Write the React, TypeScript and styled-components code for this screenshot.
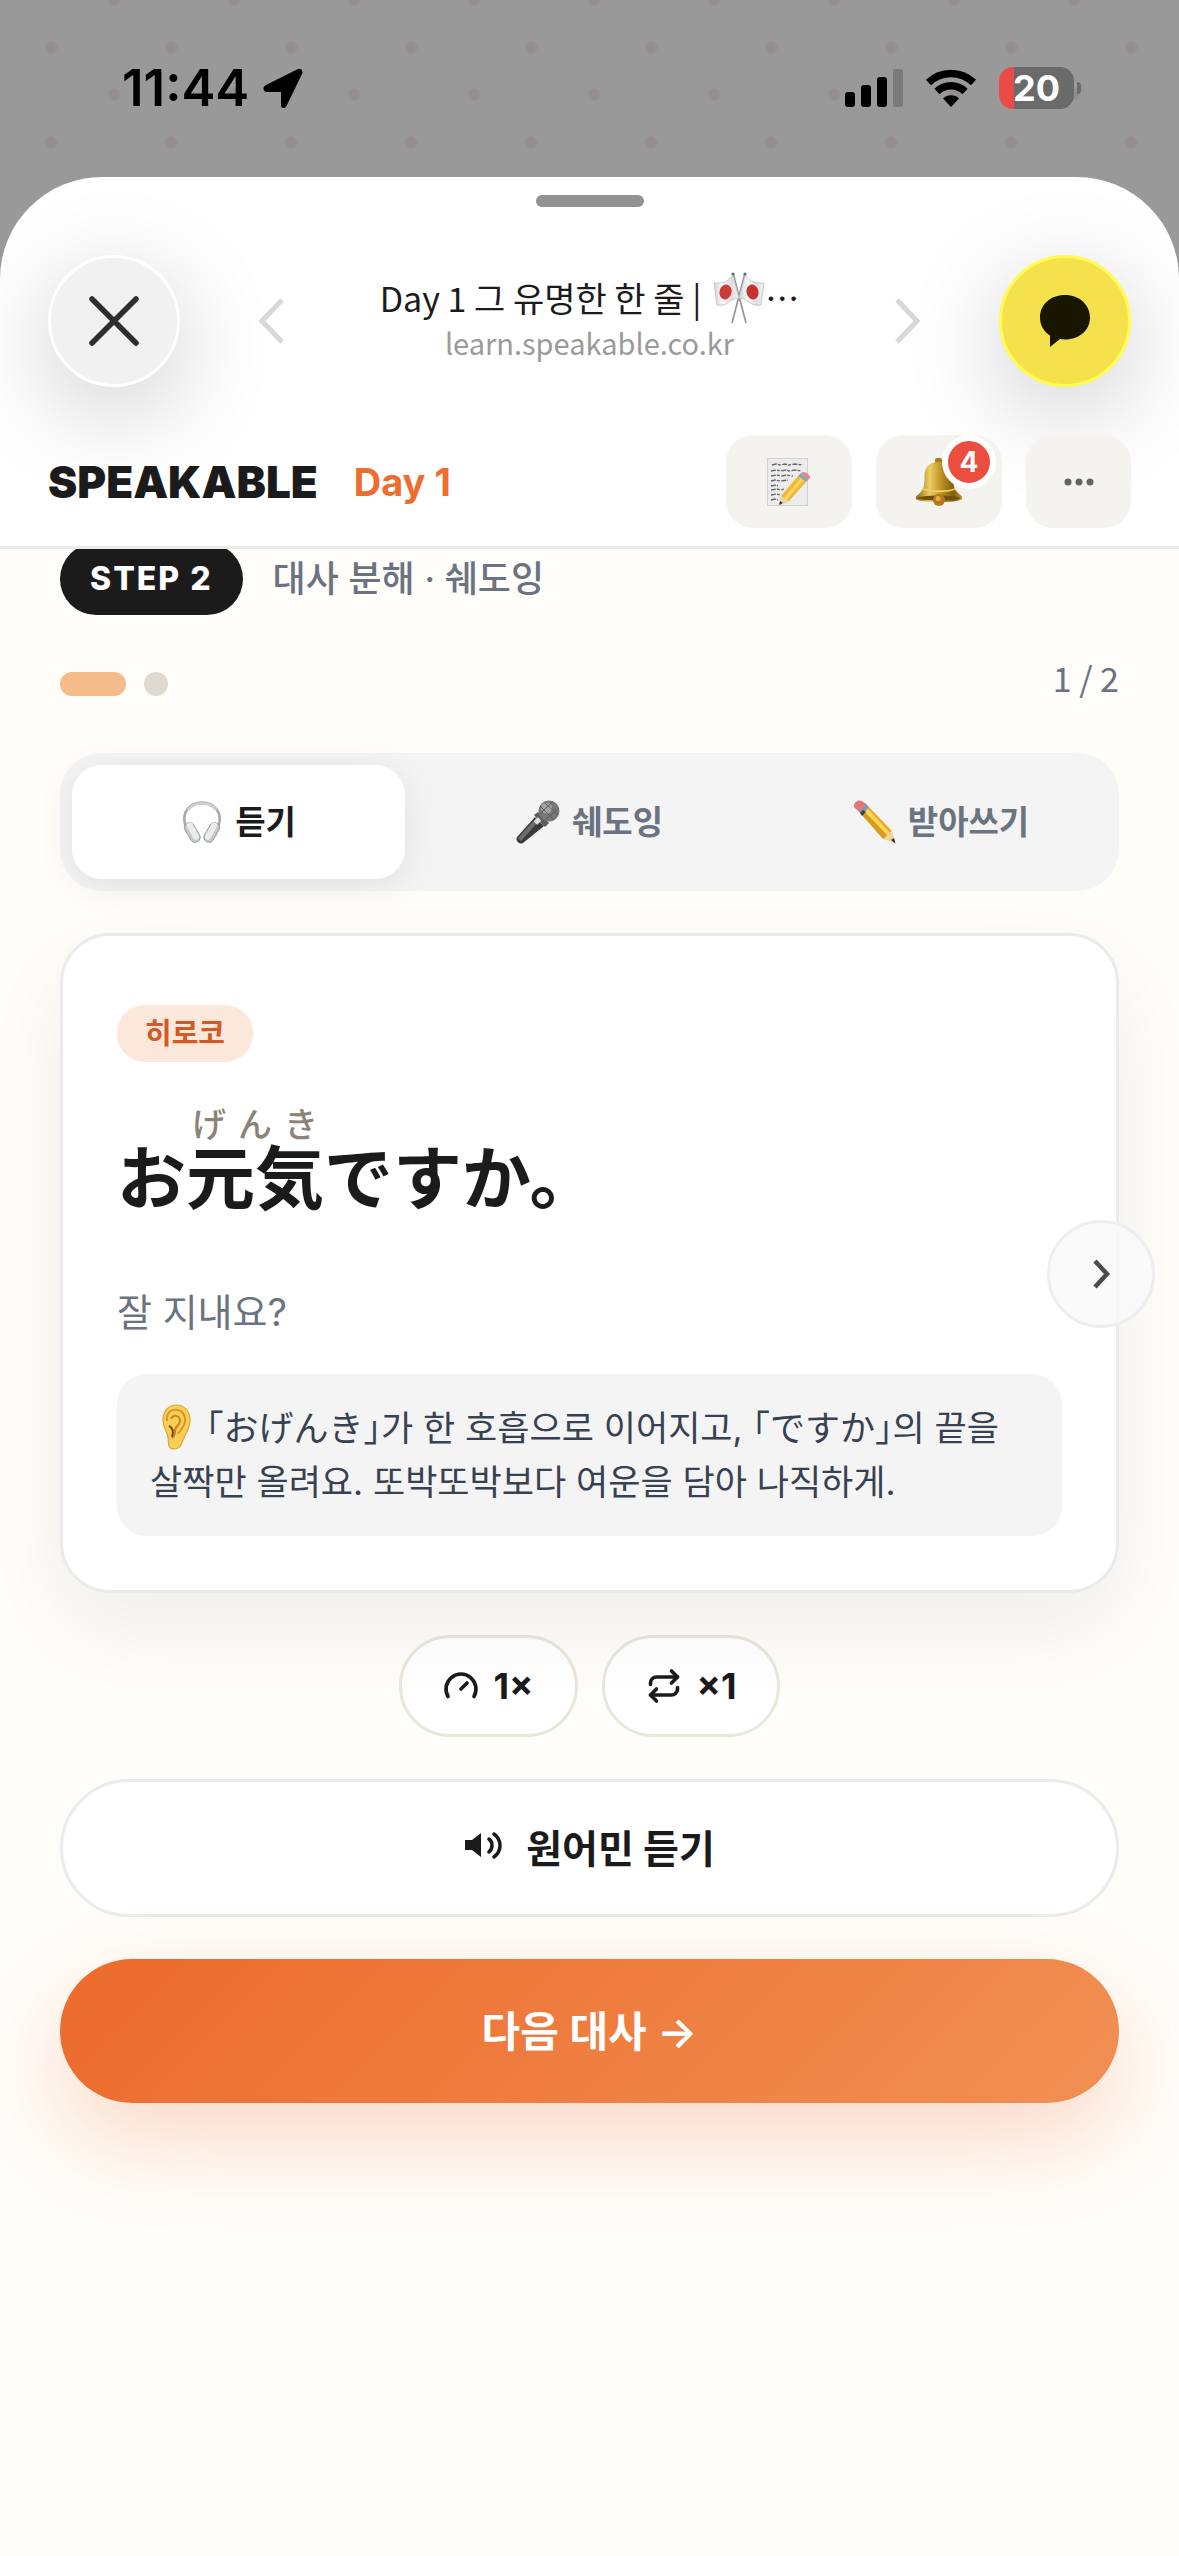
import React, { useState } from "react";
import styled, { createGlobalStyle, css } from "styled-components";
import { Gauge, Repeat } from "lucide-react";

const color = {
  ink: "#1b1b1b",
  muted: "#6b7280",
  body: "#374151",
  line: "#ebebec",
  soft: "#f4f4f4",
  paper: "#fffdf9",
  accent: "#ee6c2d",
};

const GlobalStyle = createGlobalStyle`
  *, *::before, *::after { box-sizing: border-box; }
  body {
    margin: 0;
    background: #999999;
    color: ${color.ink};
    font-family: Inter, "Noto Sans CJK KR", "Noto Sans CJK JP", sans-serif;
  }
  button {
    margin: 0;
    padding: 0;
    border: 0;
    background: none;
    color: inherit;
    font: inherit;
    cursor: pointer;
  }
  svg { display: block; flex: none; }
`;

const Screen = styled.div`
  display: flex;
  flex-direction: column;
  min-height: 100vh;
  background-color: #999999;
  background-image:
    radial-gradient(circle, #958d91 5px, transparent 7px),
    radial-gradient(circle, #958d91 5px, transparent 7px);
  background-size: 120px 95px;
  background-position: -9px 0, 54px 47px;
`;

/* ---------- status bar ---------- */

const StatusBar = styled.div`
  display: flex;
  justify-content: space-between;
  align-items: center;
  padding: 58px 98px 59px 122px;
  color: #000;
`;

const StatusSide = styled.div<{ $gap: number }>`
  display: flex;
  align-items: center;
  gap: ${(p) => p.$gap}px;
`;

const Clock = styled.span`
  font-size: 51px;
  line-height: 60px;
  font-weight: 600;
`;

const Battery = styled.div`
  display: flex;
  align-items: center;
  gap: 3px;
`;

const BatteryBody = styled.div`
  width: 75px;
  height: 42px;
  border-radius: 14px;
  background: linear-gradient(90deg, #eb4b47 20%, #6a6a6a 20%);
  color: #fff;
  font-size: 36px;
  line-height: 42px;
  font-weight: 700;
  text-align: center;
`;

const BatteryTip = styled.div`
  width: 4px;
  height: 12px;
  border-radius: 0 4px 4px 0;
  background: #6a6a6a;
`;

/* ---------- sheet ---------- */

const Sheet = styled.div`
  flex: 1;
  display: flex;
  flex-direction: column;
  overflow: hidden;
  border-radius: 102px 102px 0 0;
  background: #fff;
`;

const GrabberZone = styled.div`
  display: flex;
  justify-content: center;
  height: 48px;
  padding-top: 18px;
`;

const Grabber = styled.div`
  width: 108px;
  height: 12px;
  border-radius: 6px;
  background: #929292;
`;

const BrowserBar = styled.header`
  display: flex;
  align-items: center;
  justify-content: space-between;
  padding: 30px 48px;
`;

const BarSide = styled.div`
  display: flex;
  align-items: center;
  gap: 78px;
`;

const RoundButton = styled.button<{ $fill: string; $edge: string }>`
  display: grid;
  place-items: center;
  width: 132px;
  height: 132px;
  border: 3px solid ${(p) => p.$edge};
  border-radius: 50%;
  background: ${(p) => p.$fill};
  box-shadow: 0 24px 100px rgba(0, 0, 0, 0.2);
`;

const PageInfo = styled.div`
  display: flex;
  flex-direction: column;
  align-items: center;
  padding-bottom: 10px;
  font-family: "Noto Sans CJK KR", sans-serif;
`;

const PageTitle = styled.div`
  display: flex;
  align-items: center;
  gap: 12px;
  font-size: 34px;
  line-height: 48px;
  white-space: nowrap;
`;

const TitleEnd = styled.span`
  display: flex;
  align-items: center;
`;

const PageHost = styled.div`
  color: #9a9a9a;
  font-size: 29px;
  line-height: 36px;
`;

const AppBar = styled.header`
  display: flex;
  align-items: center;
  justify-content: space-between;
  padding: 18px 48px;
  border-bottom: 3px solid ${color.line};
`;

const Brand = styled.div`
  display: flex;
  align-items: center;
  gap: 36px;
`;

const Logo = styled.span`
  font-size: 44px;
  line-height: 60px;
  font-weight: 900;
`;

const DayLabel = styled.span`
  color: ${color.accent};
  font-size: 38px;
  line-height: 60px;
  font-weight: 700;
`;

const AppActions = styled.div`
  display: flex;
  gap: 24px;
`;

const ActionButton = styled.button<{ $narrow?: boolean }>`
  position: relative;
  display: grid;
  place-items: center;
  width: ${(p) => (p.$narrow ? 105 : 126)}px;
  height: 93px;
  border-radius: 27px;
  background: #f4f3f0;
`;

const CountBadge = styled.span`
  position: absolute;
  top: 0;
  right: 6px;
  width: 54px;
  height: 54px;
  border: 6px solid #fff;
  border-radius: 50%;
  background: #eb4d3f;
  color: #fff;
  font-size: 28px;
  line-height: 42px;
  font-weight: 700;
  text-align: center;
`;

/* ---------- lesson ---------- */

const Lesson = styled.main`
  flex: 1;
  overflow: hidden;
  padding: 0 60px 60px;
  background: ${color.paper};
`;

const StepRow = styled.div`
  display: flex;
  align-items: center;
  gap: 30px;
  margin-top: -6px;
`;

const StepPill = styled.span`
  padding: 0 30px;
  border-radius: 36px;
  background: ${color.ink};
  color: #fff;
  font-size: 32px;
  line-height: 72px;
  font-weight: 800;
  letter-spacing: 2px;
`;

const StepName = styled.h1`
  margin: 0;
  color: ${color.muted};
  font-size: 36px;
  line-height: 72px;
  font-weight: 500;
`;

const ProgressRow = styled.div`
  display: flex;
  align-items: flex-end;
  justify-content: space-between;
  margin-top: 45px;
`;

const Dots = styled.div`
  display: flex;
  gap: 18px;
`;

const Dot = styled.span<{ $active?: boolean }>`
  width: ${(p) => (p.$active ? 66 : 24)}px;
  height: 24px;
  border-radius: 12px;
  background: ${(p) => (p.$active ? "#f5bb88" : "#dfdad0")};
`;

const PageCount = styled.span`
  color: ${color.muted};
  font-family: "Noto Sans CJK KR", sans-serif;
  font-size: 34px;
  line-height: 36px;
`;

const Tabs = styled.div`
  display: grid;
  grid-template-columns: repeat(3, 1fr);
  gap: 18px;
  margin-top: 57px;
  padding: 12px;
  border-radius: 42px;
  background: ${color.soft};
`;

const Tab = styled.button<{ $active: boolean }>`
  display: flex;
  align-items: center;
  justify-content: center;
  gap: 12px;
  height: 114px;
  border-radius: 30px;
  color: ${color.muted};
  font-size: 33px;
  line-height: 48px;
  font-weight: 700;
  ${(p) =>
    p.$active &&
    css`
      background: #fff;
      color: ${color.ink};
      box-shadow: 0 6px 36px rgba(0, 0, 0, 0.08);
    `}
`;

const CardSlot = styled.section`
  position: relative;
  margin: 42px 0 21px;
  padding-bottom: 21px;
`;

const Card = styled.article`
  display: flex;
  flex-direction: column;
  align-items: flex-start;
  padding: 69px 54px 54px;
  border: 3px solid ${color.line};
  border-radius: 50px;
  background: #fff;
  box-shadow: 0 36px 84px rgba(0, 0, 0, 0.06);
`;

const Speaker = styled.span`
  padding: 0 28px;
  border-radius: 28px;
  background: #fce8da;
  color: #d15a26;
  font-size: 29px;
  line-height: 57px;
  font-weight: 700;
`;

const Sentence = styled.p`
  display: flex;
  align-items: flex-end;
  margin: 45px 0 66px;
  font-family: "Liberation Sans", "Noto Sans CJK JP", sans-serif;
  font-size: 69px;
  line-height: 76px;
  font-weight: 700;
`;

const Ruby = styled.ruby`
  display: flex;
  flex-direction: column;
`;

const Reading = styled.rt`
  display: flex;
  order: -1;
  justify-content: space-around;
  color: #8c8378;
  font-size: 34px;
  line-height: 36px;
  font-weight: 500;
`;

const Translation = styled.p`
  margin: 0 0 35px;
  color: ${color.muted};
  font-size: 38px;
  line-height: 54px;
`;

const Hint = styled.p`
  align-self: stretch;
  margin: 0;
  padding: 27px 33px;
  border-radius: 30px;
  background: ${color.soft};
  color: ${color.body};
  font-size: 35px;
  line-height: 54px;
  font-feature-settings: "halt";
  word-break: keep-all;
`;

const InlineIcon = styled.span`
  display: inline-block;
  margin: 0 15px 0 12px;
  vertical-align: -9px;
`;

const NextArrow = styled.button`
  position: absolute;
  top: 50%;
  right: -36px;
  display: grid;
  place-items: center;
  width: 108px;
  height: 108px;
  transform: translateY(-50%);
  border: 3px solid #eceef0;
  border-radius: 50%;
  background: rgba(249, 249, 249, 0.85);
  color: #4b4b4b;
`;

const Chips = styled.div`
  display: flex;
  justify-content: center;
  gap: 24px;
`;

const Chip = styled.button`
  display: flex;
  align-items: center;
  gap: 15px;
  height: 102px;
  padding: 0 41px;
  border: 3px solid #ebe6dc;
  border-radius: 51px;
  background: #fff;
  font-size: 36px;
  font-weight: 700;
`;

const WideButton = styled.button<{ $primary?: boolean }>`
  display: flex;
  align-items: center;
  justify-content: center;
  gap: 24px;
  width: 100%;
  height: 138px;
  margin-top: 42px;
  padding-bottom: 4px;
  border: 3px solid ${color.line};
  border-radius: 72px;
  background: #fff;
  font-size: 39px;
  font-weight: 700;
  ${(p) =>
    p.$primary &&
    css`
      height: 144px;
      padding-bottom: 6px;
      border: 0;
      background: linear-gradient(135deg, #ec6a2c, #f19053);
      box-shadow: 0 36px 90px rgba(236, 106, 44, 0.24);
      color: #fff;
      font-size: 42px;
      font-weight: 600;
    `}
`;

/* ---------- drawings ---------- */

const LocationArrow = () => (
  <svg width="40" height="40" viewBox="0 0 40 40" aria-hidden="true">
    <path d="M35 1 3 17C-1 19 0 24 4 24h14v13c0 4 4 4 5.500 1L39 6c1.500-3-1-6-4-5z" fill="#000" />
  </svg>
);

const SignalBars = () => (
  <svg width="58" height="38" viewBox="0 0 58 38" aria-hidden="true">
    <rect x="0" y="23" width="10" height="15" rx="3" />
    <rect x="16" y="16" width="10" height="22" rx="3" />
    <rect x="32" y="8" width="10" height="30" rx="3" />
    <rect x="48" y="0" width="10" height="38" rx="3" fill="#7a7a7a" />
  </svg>
);

const WifiMark = () => (
  <svg width="52" height="38" viewBox="0 0 52 38" aria-hidden="true">
    <path d="M3.500 13.500a32.500 32.500 0 0 1 45 0" fill="none" stroke="#000" strokeWidth="7.500" />
    <path d="M12 22.500a20 20 0 0 1 28 0" fill="none" stroke="#000" strokeWidth="7.500" />
    <path d="M18 29.500a11.500 11.500 0 0 1 16 0L26 38z" />
  </svg>
);

const CloseMark = () => (
  <svg width="52" height="52" viewBox="0 0 52 52" aria-hidden="true">
    <path d="M4 4l44 44M48 4L4 48" stroke="#2e2e2e" strokeWidth="5.500" strokeLinecap="round" />
  </svg>
);

const ThinChevron = ({ back }: { back?: boolean }) => (
  <svg width="26" height="46" viewBox="0 0 26 46" aria-hidden="true">
    <path d={back ? "M24 2 4 23l20 21" : "M2 2l20 21L2 44"} fill="none" stroke="#d8d8d8" strokeWidth="5" />
  </svg>
);

const TalkBubble = () => (
  <svg width="52" height="54" viewBox="0 0 52 54" aria-hidden="true">
    <path
      d="M26 1C11.500 1 1 10.500 1 23.500c0 8 4 14 10 18V53l10-8c1.600.3 3.200.5 5 .5 14.500 0 25-9.500 25-22S40.500 1 26 1z"
      fill="#191600"
    />
  </svg>
);

const CrossedFlags = () => (
  <svg width="52" height="52" viewBox="0 0 52 52" aria-hidden="true">
    <defs>
      <linearGradient id="cloth" x1="0" x2="1">
        <stop offset="0" stopColor="#d4d4d4" />
        <stop offset="0.35" stopColor="#fafafa" />
        <stop offset="0.7" stopColor="#dedede" />
        <stop offset="1" stopColor="#f4f4f4" />
      </linearGradient>
    </defs>
    <path d="M32 1 19 51M20 1l13 50" stroke="#8e9399" strokeWidth="1.600" />
    <path d="M20 4C15 7 14 12 1 11l3 22c12 2 12-7 22-7z" fill="url(#cloth)" stroke="#bdbdbd" strokeWidth=".8" />
    <path d="M32 4c5 3 6 8 19 7l-3 22c-12 2-12-7-22-7z" fill="url(#cloth)" stroke="#bdbdbd" strokeWidth=".8" />
    <ellipse cx="12.500" cy="20" rx="6" ry="7.500" fill="#cf3a3a" transform="rotate(15 12.500 20)" />
    <ellipse cx="39.500" cy="20" rx="6" ry="7.500" fill="#c93030" transform="rotate(-15 39.500 20)" />
    <circle cx="20" cy="2" r="1.600" fill="#5e6a7c" />
    <circle cx="32" cy="2" r="1.600" fill="#5e6a7c" />
  </svg>
);

const MemoMark = () => (
  <svg width="44" height="48" viewBox="0 0 44 48" aria-hidden="true">
    <rect x=".5" y=".5" width="40" height="47" fill="#ececec" stroke="#d2d2d2" />
    <path
      d="M5 7l4-1 4 1 5-1 4 1 6-1 7 1M4 13l5-1 4 1 6-1 3 1 7-1 5 1M4 18l6-1 5 1 5-1 6 1M4 23l4-1 6 1 7-1M4 28l5-1 2 1M4 32l6-1 4 1 3-1M4 37l5-1 4 1M4 42l4-1 3 1"
      fill="none"
      stroke="#666"
      strokeWidth="1.300"
      strokeDasharray="5 1 3 1.500"
    />
    <path d="M14 38 31 18l8 6-17 19-9 4z" fill="#f1b933" />
    <path d="M17 40 34 20l2.500 2L19.500 42z" fill="#ffd65c" />
    <path d="M14 38l-2 8 2 1 8-4z" fill="#f0d2a0" />
    <path d="M13 43l-1 4 4-2z" fill="#333" />
    <path d="M31 18l3-3 8 6-3 3z" fill="#92a3b4" />
    <path d="M34 15c2-2 5-1 7 1s3 4 1 5z" fill="#e8848a" />
  </svg>
);

const BellMark = () => (
  <svg width="48" height="48" viewBox="0 0 48 48" aria-hidden="true">
    <defs>
      <linearGradient id="brass" x1="0" x2="1">
        <stop offset="0" stopColor="#8d6a10" />
        <stop offset="0.3" stopColor="#ecce62" />
        <stop offset="0.55" stopColor="#bd9223" />
        <stop offset="0.8" stopColor="#80600e" />
        <stop offset="1" stopColor="#c09528" />
      </linearGradient>
    </defs>
    <rect x="20" y="0" width="7" height="8" rx="2" fill="#a47e1c" />
    <path
      d="M23.500 4C14 4 9.500 10 9.500 18c0 9 0 14-8 20-1 2-1 3 0 3.500 6 3.500 39 3.500 45 0 1-.5 1-1.500 0-3.500-8-6-8.500-11-8.500-20 0-8-5-14-14.500-14z"
      fill="url(#brass)"
    />
    <path d="M8 31c8 3 24 3 32 0" fill="none" stroke="#efd067" strokeWidth="1.800" />
    <ellipse cx="24" cy="40" rx="21" ry="2.500" fill="#71510a" />
    <circle cx="24" cy="42" r="6" fill="#b5781e" />
    <circle cx="23" cy="40.500" r="2.500" fill="#e7ae50" />
  </svg>
);

const MoreMark = () => (
  <svg width="30" height="8" viewBox="0 0 30 8" fill="#68625f" aria-hidden="true">
    <circle cx="4" cy="4" r="3.500" />
    <circle cx="15" cy="4" r="3.500" />
    <circle cx="26" cy="4" r="3.500" />
  </svg>
);

const HeadphonesMark = () => (
  <svg width="42" height="44" viewBox="0 0 42 44" aria-hidden="true">
    <path d="M4.500 26C0 12 9 2.500 21 2.500S42 12 37.500 26" fill="none" stroke="#a8a8a8" strokeWidth="2.500" />
    <path d="M7 10C11 4 16 3.500 21 3.500S31 4 35 10" fill="none" stroke="#cfcfcf" strokeWidth="3" />
    <g stroke="#8f949a" strokeWidth=".8">
      <rect x="-5" y="-10" width="10" height="21" rx="4.500" transform="translate(11 32) rotate(-30)" fill="#c3c8ce" />
      <rect x="-4" y="-10" width="6" height="19" rx="3" transform="translate(13 31) rotate(-28)" fill="#ececec" stroke="none" />
      <rect x="-5" y="-10" width="10" height="21" rx="4.500" transform="translate(31 32) rotate(30)" fill="#c3c8ce" />
      <rect x="-2" y="-10" width="6" height="19" rx="3" transform="translate(29 31) rotate(28)" fill="#ececec" stroke="none" />
    </g>
  </svg>
);

const MicMark = () => (
  <svg width="44" height="44" viewBox="0 0 44 44" aria-hidden="true">
    <path d="M19 17l9 9L7 43c-3 2-8-2-6-6z" fill="#3a3a3a" />
    <path d="M20 18l3 3L5 41l-3-3z" fill="#6c6c6c" />
    <path d="M18 15l4-3 11 11-4 4z" fill="#5a5a5a" />
    <circle cx="33" cy="11" r="10.500" fill="#777" />
    <circle cx="30.500" cy="8" r="5.500" fill="#a3a3a3" />
    <path d="M24 6l14 14M28 2l14 13M24 14l13-13M29 20L43 8" stroke="#5d5d5d" strokeWidth="1" />
    <rect x="19" y="18" width="5" height="6" rx="1" fill="#ddd" transform="rotate(45 21.500 21)" />
  </svg>
);

const PencilMark = () => (
  <svg width="44" height="44" viewBox="0 0 44 44" aria-hidden="true">
    <path d="M10 15 17 7l23 24-9 8z" fill="#e9ab28" />
    <path d="M10 15l3-3.500 23 24-4.500 3.500z" fill="#d99a1e" />
    <path d="M13 12l3-3 22 24-2.500 2.500z" fill="#ffd653" />
    <path d="M31 39l9-8 3.500 12z" fill="#f1d29b" />
    <path d="M39 40l3-2 1.500 5.500z" fill="#2f2f2f" />
    <path d="M6 11l7-8 4 4-7 8z" fill="#8299b2" />
    <path d="M8 13l3-3 3 2-4 4z" fill="#3e4348" />
    <path d="M2 7C1 3 6-1 10 1l4 3-7 8z" fill="#e5777b" />
  </svg>
);

const EarMark = () => (
  <svg width="29" height="46" viewBox="0 0 29 46" aria-hidden="true">
    <path
      d="M14 1C6 1 1 8 1 16c0 8 4 11 5 17 1 5-1 12 6 12 6 0 7-4 9-9 2-6 7-11 7-20S22 1 14 1z"
      fill="#f8cf55"
      stroke="#dfa532"
      strokeWidth="1.200"
    />
    <path d="M5 17C4 9 9 5 15 6c7 1 10 8 7 15-2 5-5 6-6 9" fill="none" stroke="#d9962b" strokeWidth="2" />
    <path d="M9 15c2-5 9-4 9 2 0 5-6 5-5 11 0 3-2 6-3 6" fill="none" stroke="#c98424" strokeWidth="2" />
    <path d="M7 22c4 2 5 5 3 11" fill="none" stroke="#7a4a12" strokeWidth="2" />
  </svg>
);

const NextChevron = () => (
  <svg width="20" height="32" viewBox="0 0 20 32" aria-hidden="true">
    <path d="M4 3l12 13L4 29" fill="none" stroke="currentColor" strokeWidth="4.500" />
  </svg>
);

const SpeakerMark = () => (
  <svg width="38" height="28" viewBox="0 0 38 28" aria-hidden="true">
    <path d="M1 8h7l9-7v24l-9-7H1z" fill={color.ink} />
    <path d="M25 7c4 3 4 10 0 13M30 2c8 6 8 17 0 23" fill="none" stroke={color.ink} strokeWidth="3.500" strokeLinecap="round" />
  </svg>
);

const tabs = [
  { id: "listen", label: "듣기", icon: <HeadphonesMark /> },
  { id: "shadow", label: "쉐도잉", icon: <MicMark /> },
  { id: "dictate", label: "받아쓰기", icon: <PencilMark /> },
];

export default function App() {
  const [active, setActive] = useState("listen");

  return (
    <Screen>
      <GlobalStyle />
      <StatusBar>
        <StatusSide $gap={14}>
          <Clock>11:44</Clock>
          <LocationArrow />
        </StatusSide>
        <StatusSide $gap={22}>
          <SignalBars />
          <WifiMark />
          <Battery>
            <BatteryBody>20</BatteryBody>
            <BatteryTip />
          </Battery>
        </StatusSide>
      </StatusBar>

      <Sheet>
        <GrabberZone>
          <Grabber />
        </GrabberZone>

        <BrowserBar>
          <BarSide>
            <RoundButton $fill="#f1f1f1" $edge="#ffffff" aria-label="닫기">
              <CloseMark />
            </RoundButton>
            <button aria-label="이전">
              <ThinChevron back />
            </button>
          </BarSide>
          <PageInfo>
            <PageTitle>
              <span>Day 1 그 유명한 한 줄 |</span>
              <TitleEnd>
                <CrossedFlags />
                <span>⋯</span>
              </TitleEnd>
            </PageTitle>
            <PageHost>learn.speakable.co.kr</PageHost>
          </PageInfo>
          <BarSide>
            <button aria-label="다음">
              <ThinChevron />
            </button>
            <RoundButton $fill="#f5e14b" $edge="#fffb4f" aria-label="공유">
              <TalkBubble />
            </RoundButton>
          </BarSide>
        </BrowserBar>

        <AppBar>
          <Brand>
            <Logo>SPEAKABLE</Logo>
            <DayLabel>Day 1</DayLabel>
          </Brand>
          <AppActions>
            <ActionButton aria-label="노트">
              <MemoMark />
            </ActionButton>
            <ActionButton aria-label="알림">
              <BellMark />
              <CountBadge>4</CountBadge>
            </ActionButton>
            <ActionButton $narrow aria-label="더보기">
              <MoreMark />
            </ActionButton>
          </AppActions>
        </AppBar>

        <Lesson>
          <StepRow>
            <StepPill>STEP 2</StepPill>
            <StepName>대사 분해 · 쉐도잉</StepName>
          </StepRow>

          <ProgressRow>
            <Dots>
              <Dot $active />
              <Dot />
            </Dots>
            <PageCount>1 / 2</PageCount>
          </ProgressRow>

          <Tabs>
            {tabs.map((tab) => (
              <Tab
                key={tab.id}
                $active={tab.id === active}
                aria-pressed={tab.id === active}
                onClick={() => setActive(tab.id)}
              >
                {tab.icon}
                {tab.label}
              </Tab>
            ))}
          </Tabs>

          <CardSlot>
            <Card>
              <Speaker>히로코</Speaker>
              <Sentence lang="ja">
                <span>お</span>
                <Ruby>
                  <span>元気</span>
                  <Reading>
                    {[..."げんき"].map((kana) => (
                      <span key={kana}>{kana}</span>
                    ))}
                  </Reading>
                </Ruby>
                <span>ですか。</span>
              </Sentence>
              <Translation>잘 지내요?</Translation>
              <Hint>
                <InlineIcon>
                  <EarMark />
                </InlineIcon>
                「おげんき」가 한 호흡으로 이어지고, 「ですか」의 끝을 살짝만 올려요. 또박또박보다 여운을 담아 나직하게.
              </Hint>
            </Card>
            <NextArrow aria-label="다음 카드">
              <NextChevron />
            </NextArrow>
          </CardSlot>

          <Chips>
            <Chip>
              <Gauge size={36} strokeWidth={2.4} />
              1×
            </Chip>
            <Chip>
              <Repeat size={36} strokeWidth={2.4} />
              ×1
            </Chip>
          </Chips>

          <WideButton>
            <SpeakerMark />
            원어민 듣기
          </WideButton>
          <WideButton $primary>다음 대사 →</WideButton>
        </Lesson>
      </Sheet>
    </Screen>
  );
}
